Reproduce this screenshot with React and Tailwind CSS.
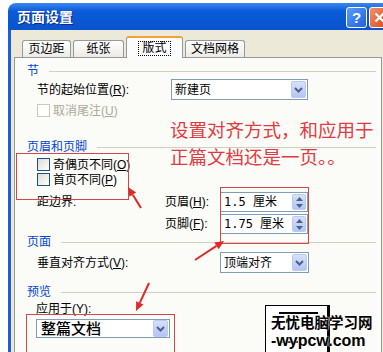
import React from "react";

const tabs = [
  { label: "页边距", w: "w-[49px]" },
  { label: "纸张", w: "w-[51px]" },
  { label: "版式", w: "w-[57px]", active: true },
  { label: "文档网格", w: "w-[60px]" },
];

function Check({ disabled }) {
  return disabled ? (
    <div className="h-[13px] w-[13px] shrink-0 border border-[#CAC8BB] bg-white" />
  ) : (
    <div className="h-[13px] w-[13px] shrink-0 border border-[#1C5180] bg-gradient-to-br from-[#DCDCD5] to-white" />
  );
}

function DropBtn() {
  return (
    <div className="flex h-[17px] w-[15px] items-center justify-center rounded-[2px] border border-[#B9CBF3] bg-gradient-to-b from-[#D5E0FA] to-[#B2C6F4]">
      <svg width="9" height="6" viewBox="0 0 9 6">
        <path d="M1 1l3.5 3.5L8 1" fill="none" stroke="#4D6185" strokeWidth="2" />
      </svg>
    </div>
  );
}

function SpinBtn() {
  return (
    <div className="flex h-[16px] w-[14px] flex-col overflow-hidden rounded-[2px] border border-[#B9CBF3] bg-gradient-to-b from-[#D5E0FA] to-[#B2C6F4]">
      <div className="flex flex-1 items-center justify-center">
        <svg width="7" height="4" viewBox="0 0 7 4">
          <path d="M0 4L3.5 0L7 4z" fill="#4D6185" />
        </svg>
      </div>
      <div className="flex flex-1 items-center justify-center">
        <svg width="7" height="4" viewBox="0 0 7 4">
          <path d="M0 0L3.5 4L7 0z" fill="#4D6185" />
        </svg>
      </div>
    </div>
  );
}

function Heading({ children, className }) {
  return (
    <div className={className}>
      <span className="text-[12px] leading-none text-[#0046D5]">{children}</span>
      <div className="ml-[10px] mr-[5px] h-px flex-1 bg-[#D0D0BF]" />
    </div>
  );
}

function Spinner({ value }) {
  return (
    <div className="flex h-[20px] w-[88px] items-center justify-between border border-[#7F9DB9] bg-white pl-[3px] pr-[1px]">
      <span className="font-['DejaVu_Sans_Mono','Noto_Sans_CJK_SC',monospace] text-[12px] leading-none">{value}</span>
      <SpinBtn />
    </div>
  );
}

function Arrow({ x1, y1, x2, y2 }) {
  const dx = x2 - x1;
  const dy = y2 - y1;
  const len = Math.hypot(dx, dy);
  const ux = dx / len;
  const uy = dy / len;
  const bx = x2 - ux * 9;
  const by = y2 - uy * 9;
  const pts = `${x2},${y2} ${bx - uy * 4},${by + ux * 4} ${bx + uy * 4},${by - ux * 4}`;
  return (
    <g>
      <line x1={x1} y1={y1} x2={bx} y2={by} stroke="#E02828" strokeWidth="2" />
      <polygon points={pts} fill="#E02828" />
    </g>
  );
}

export default function App() {
  return (
    <div className="relative h-[352px] w-[383px] overflow-hidden bg-white pl-[8px] pt-[3px] font-['Liberation_Sans','Noto_Sans_CJK_SC',sans-serif] text-black">
      <div className="flex h-[400px] w-[385px] flex-col">
        {/* title bar */}
        <div className="flex h-[27px] items-start rounded-tl-[8px] bg-gradient-to-b from-[#3A88F0] via-[#0A5BD8] via-30% to-[#0A54CE] pl-[9px] pr-[3px] pt-[4px]">
          <span className="mt-[3px] text-[14px] font-bold leading-none text-white [text-shadow:1px_1px_0_#0A2C8C]">
            页面设置
          </span>
          <div className="ml-auto flex gap-[2px]">
            <div className="flex h-[21px] w-[21px] items-center justify-center rounded-[3px] border border-white bg-gradient-to-br from-[#5A9CFF] to-[#1F5FE0] text-[15px] font-bold leading-none text-white">
              ?
            </div>
            <div className="flex h-[21px] w-[21px] items-center justify-center rounded-[3px] border border-white bg-gradient-to-br from-[#F0906A] to-[#D8441E]">
              <svg width="11" height="11" viewBox="0 0 11 11">
                <path d="M1.5 1.5l8 8M9.5 1.5l-8 8" stroke="white" strokeWidth="2.2" />
              </svg>
            </div>
          </div>
        </div>

        {/* body */}
        <div className="flex flex-1 flex-col border-l-[3px] border-[#1F5ED6] bg-[#ECE9D8] pl-[3px] pt-[6px]">
          <div className="ml-[8px] flex h-[21px] items-end gap-[2px] text-[12px]">
            {tabs.map((t) =>
              t.active ? (
                <div
                  key={t.label}
                  className={`relative z-10 -mb-px flex h-[22px] ${t.w} items-center justify-center rounded-t-[3px] border border-b-0 border-[#919B9C] border-t-2 border-t-[#F2A236] bg-[#FCFCFE]`}
                >
                  <span className="border border-dotted border-black px-[3px] leading-[13px]">{t.label}</span>
                </div>
              ) : (
                <div
                  key={t.label}
                  className={`flex h-[17px] ${t.w} items-center justify-center rounded-t-[3px] border border-b-0 border-[#919B9C] bg-gradient-to-b from-white to-[#ECEBE6]`}
                >
                  {t.label}
                </div>
              )
            )}
          </div>

          {/* panel */}
          <div className="flex w-[368px] flex-1 flex-col border border-[#919B9C] bg-[#FBFBF8] pl-[12px] text-[12px] leading-none">
            <Heading className="mt-[6px] flex h-[14px] items-center">节</Heading>

            <div className="ml-[10px] mt-px flex h-[21px] items-center">
              <span className="w-[134px]">
                节的起始位置(<span className="underline">R</span>):
              </span>
              <div className="flex h-[21px] w-[137px] items-center justify-between border border-[#7F9DB9] bg-white pl-[3px] pr-[1px]">
                <span>新建页</span>
                <DropBtn />
              </div>
            </div>

            <div className="ml-[10px] mt-[4px] flex h-[13px] items-center gap-[2px] text-[#ACA899]">
              <Check disabled />
              <span className="ml-[1px]">
                取消尾注(<span className="underline">U</span>)
              </span>
            </div>

            <Heading className="mt-[23px] flex h-[14px] items-center">页眉和页脚</Heading>

            <div className="ml-[10px] mt-[4px] flex h-[13px] items-center gap-[3px]">
              <Check />
              <span>
                奇偶页不同(<span className="underline">O</span>)
              </span>
            </div>
            <div className="ml-[10px] mt-[2px] flex h-[13px] items-center gap-[3px]">
              <Check />
              <span>
                首页不同(<span className="underline">P</span>)
              </span>
            </div>

            <div className="ml-[10px] mt-[6px] flex h-[20px] items-center">
              <span className="w-[128px]">距边界:</span>
              <span className="w-[55px]">
                页眉(<span className="underline">H</span>):
              </span>
              <Spinner value="1.5 厘米" />
            </div>
            <div className="ml-[10px] mt-[2px] flex h-[20px] items-center">
              <span className="w-[128px]" />
              <span className="w-[55px]">
                页脚(<span className="underline">F</span>):
              </span>
              <Spinner value="1.75 厘米" />
            </div>

            <Heading className="mt-px flex h-[14px] items-center">页面</Heading>

            <div className="ml-[10px] mt-[3px] flex h-[21px] items-center">
              <span className="w-[183px]">
                垂直对齐方式(<span className="underline">V</span>):
              </span>
              <div className="flex h-[21px] w-[89px] items-center justify-between border border-[#7F9DB9] bg-white pl-[3px] pr-[1px]">
                <span>顶端对齐</span>
                <DropBtn />
              </div>
            </div>

            <Heading className="mt-[12px] flex h-[14px] items-center">预览</Heading>

            <div className="ml-[9px] flex">
              <div className="flex w-[229px] flex-col">
                <span className="mt-[3px] flex h-[14px] items-center">
                  应用于(<span className="underline">Y</span>):
                </span>
                <div className="mt-[3px] flex h-[19px] w-[134px] items-center justify-between border border-[#7F9DB9] bg-white pl-[4px] pr-[1px]">
                  <span className="text-[15px] font-medium">整篇文档</span>
                  <DropBtn />
                </div>
              </div>
              <div className="mt-[6px] flex h-[60px] w-[65px] flex-col gap-[27px] border border-r-[3px] border-black bg-white pl-[13px] pt-[6px]">
                <div className="h-[2px] w-[39px] bg-black" />
                <div className="h-[2px] w-[19px] bg-black" />
              </div>
            </div>
          </div>
        </div>
      </div>

      {/* annotations */}
      <div className="absolute left-[170px] top-[117px] text-[18.5px] leading-[27px] text-[#E23A3F]">
        <div>设置对齐方式，和应用于</div>
        <div>正篇文档还是一页。。</div>
      </div>
      <div className="absolute left-[16px] top-[153px] h-[47px] w-[113px] border border-[#D04848]" />
      <div className="absolute left-[220px] top-[187px] h-[57px] w-[89px] border border-[#D04848]" />
      <div className="absolute left-[26px] top-[314px] h-[50px] w-[149px] border border-[#D04848]" />

      <svg className="pointer-events-none absolute left-0 top-0" width="383" height="352">
        <Arrow x1={141} y1={208} x2={128} y2={187} />
        <Arrow x1={195} y1={260} x2={224} y2={241} />
        <Arrow x1={149} y1={283} x2={136} y2={311} />
      </svg>

      <div className="absolute left-[271px] top-[316px] flex flex-col leading-none [text-shadow:0_0_2px_#fff,0_0_2px_#fff]">
        <span className="text-[14.5px] font-bold">无忧电脑学习网</span>
        <span className="mt-[2px] text-[16px] font-bold">-wypcw.com</span>
      </div>
    </div>
  );
}
